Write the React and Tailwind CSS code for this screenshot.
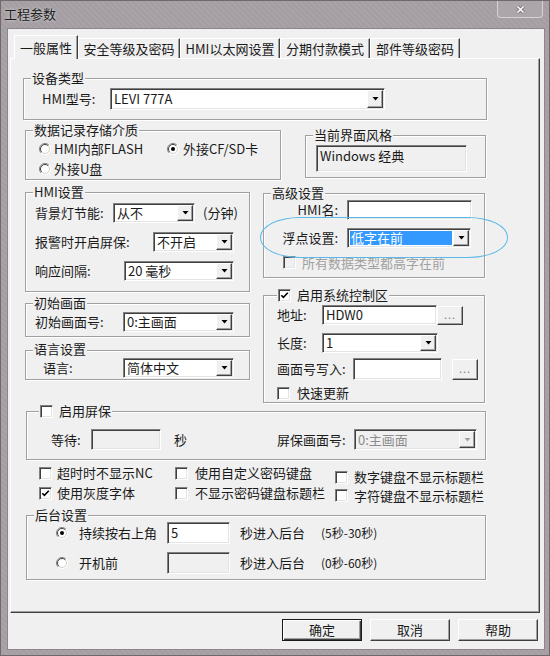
import React from "react";

const SUNKEN =
  "border border-t-[#808080] border-l-[#808080] border-b-white border-r-white shadow-[inset_1px_1px_0_#404040,inset_-1px_-1px_0_#e3e3e3]";
const RAISED =
  "border border-t-white border-l-white border-b-[#404040] border-r-[#404040] shadow-[inset_-1px_-1px_0_#a0a0a0]";

function Arrow({ disabled }) {
  return (
    <svg width="7" height="4" viewBox="0 0 7 4">
      <polygon points="0.5,0 6.5,0 3.5,3.5" fill={disabled ? "#a0a0a0" : "#000"} />
    </svg>
  );
}

function Combo({ w, h = "h-[20px]", text, sel, disabled }) {
  return (
    <div
      className={`flex shrink-0 p-[1px] ${w} ${h} ${SUNKEN} ${
        disabled ? "bg-[#f0f0f0]" : "bg-white"
      }`}
    >
      <div className="flex min-w-0 flex-1 items-center p-[1px]">
        <div
          className={`flex h-full w-full items-center whitespace-nowrap pl-[1px] ${
            sel ? "bg-[#3399ff] text-white" : ""
          } ${disabled ? "text-[#8c8c8c]" : ""}`}
        >
          {text}
        </div>
      </div>
      <div
        className={`flex w-[16px] shrink-0 items-center justify-center bg-[#f0f0f0] ${RAISED}`}
      >
        <Arrow disabled={disabled} />
      </div>
    </div>
  );
}

function Edit({ w, h = "h-[20px]", text, disabled, top }) {
  return (
    <div
      className={`flex shrink-0 whitespace-nowrap pl-[3px] ${
        top ? "items-start pt-[2px]" : "items-center"
      } ${w} ${h} ${SUNKEN} ${disabled ? "bg-[#f0f0f0]" : "bg-white"}`}
    >
      {text}
    </div>
  );
}

function DotBtn({ h = "h-[19px]" }) {
  return (
    <div
      className={`flex w-[26px] shrink-0 items-center justify-center bg-[#f0f0f0] pb-[2px] text-[11px] tracking-[1px] text-[#808080] ${h} ${RAISED}`}
    >
      ...
    </div>
  );
}

function Check({ checked, disabled }) {
  return (
    <div
      className={`relative h-[13px] w-[13px] shrink-0 ${SUNKEN} ${
        disabled ? "bg-[#f0f0f0]" : "bg-white"
      }`}
    >
      {checked && (
        <svg className="absolute left-[1px] top-[1px]" width="9" height="9" viewBox="0 0 9 9">
          <path d="M1.3 4.2 L3.4 6.4 L7.8 1.8" stroke="#000" strokeWidth="1.6" fill="none" />
        </svg>
      )}
    </div>
  );
}

function Radio({ on }) {
  return (
    <svg width="12" height="12" viewBox="0 0 12 12" className="shrink-0">
      <circle cx="6" cy="6" r="5.5" fill="#fff" />
      <path d="M9.9 2.1 A5.5 5.5 0 0 0 2.1 9.9" stroke="#808080" strokeWidth="1" fill="none" />
      <path d="M9.9 2.1 A5.5 5.5 0 0 1 2.1 9.9" stroke="#ffffff" strokeWidth="1" fill="none" />
      <path d="M9.2 2.8 A4.5 4.5 0 0 0 2.8 9.2" stroke="#404040" strokeWidth="1" fill="none" />
      <path d="M9.2 2.8 A4.5 4.5 0 0 1 2.8 9.2" stroke="#d4d0c8" strokeWidth="1" fill="none" />
      {on && <circle cx="6" cy="6" r="2" fill="#000" />}
    </svg>
  );
}

function Group({ label, className = "", children, legendLeft = "left-[7px]", legendTop = "-top-[9px]" }) {
  return (
    <div
      className={`relative shrink-0 border border-[#a0a0a0] shadow-[1px_1px_0_#fff,inset_1px_1px_0_#fff] ${className}`}
    >
      <div
        className={`absolute flex items-center whitespace-nowrap bg-[#f0f0f0] px-[1px] leading-[16px] ${legendLeft} ${legendTop}`}
      >
        {label}
      </div>
      {children}
    </div>
  );
}

function Btn({ children, def }) {
  return (
    <div
      className={`flex h-[22px] w-[80px] items-center justify-center ${
        def
          ? "border border-[#1a1a1a] shadow-[inset_1px_1px_0_#fff,inset_-1px_-1px_0_#404040,inset_-2px_-2px_0_#a0a0a0]"
          : RAISED
      }`}
    >
      {children}
    </div>
  );
}

function Tab({ w, children, active }) {
  return (
    <div
      className={`flex shrink-0 items-center justify-center border-l border-t border-r border-l-white border-t-white border-r-[#404040] bg-[#f0f0f0] shadow-[inset_-1px_0_0_#a0a0a0] ${w} ${
        active ? "relative z-10 -mb-[1px] h-[24px]" : "h-[20px]"
      }`}
    >
      {children}
    </div>
  );
}

export default function App() {
  return (
    <div className="relative h-[656px] w-[550px] overflow-hidden border border-[#6f686e] bg-[repeating-linear-gradient(45deg,#a9a3a8_0_2px,#a49ea3_2px_4px)] font-['Noto_Sans_CJK_SC',sans-serif] text-[13px] leading-[16px] text-[#1a1a1a]">
      {/* title bar */}
      <div className="flex h-[27px] items-start justify-between">
        <div className="pl-[3px] pt-[5px] text-[#202020] [text-shadow:0_0_3px_rgba(255,255,255,0.7)]">
          工程参数
        </div>
        <div className="mr-[6px] flex h-[17px] w-[46px] items-center justify-center rounded-b-[4px] border border-t-0 border-[#d6d1d5] bg-[#aca6ab]">
          <svg width="9" height="9" viewBox="0 0 9 9">
            <path d="M1.5 1.5 L7.5 7.5 M7.5 1.5 L1.5 7.5" stroke="#7a7479" strokeWidth="3.2" />
            <path d="M1.5 1.5 L7.5 7.5 M7.5 1.5 L1.5 7.5" stroke="#ffffff" strokeWidth="1.6" />
          </svg>
        </div>
      </div>

      {/* body */}
      <div className="ml-[6px] mr-[4px] flex h-[622px] flex-col border border-[#8d878c] bg-[#f0f0f0] pt-[6px]">
        {/* tabs */}
        <div className="ml-[6px] flex h-[23px] items-end">
          <Tab w="w-[64px]" active>
            一般属性
          </Tab>
          <Tab w="w-[102px]">安全等级及密码</Tab>
          <Tab w="w-[100px]">HMI以太网设置</Tab>
          <Tab w="w-[90px]">分期付款模式</Tab>
          <Tab w="w-[90px]">部件等级密码</Tab>
        </div>

        {/* panel */}
        <div className="ml-[2px] flex h-[555px] w-[530px] flex-col border border-t-white border-l-white border-r-[#404040] border-b-[#404040] shadow-[inset_-1px_-1px_0_#a0a0a0]">
          {/* 设备类型 */}
          <Group label="设备类型" className="ml-[12px] mt-[19px] h-[42px] w-[464px] pl-[18px] pt-[9px]">
            <div className="flex items-center">
              <div className="w-[68px]">HMI型号:</div>
              <Combo w="w-[275px]" h="h-[22px]" text="LEVI 777A" />
            </div>
          </Group>

          {/* row B */}
          <div className="mt-[10px] flex items-start">
            <Group label="数据记录存储介质" className="ml-[14px] h-[50px] w-[256px] pl-[13px] pt-[8px]">
              <div className="flex h-[20px] items-center">
                <div className="flex w-[128px] items-center gap-[3px]">
                  <Radio />
                  <span>HMI内部FLASH</span>
                </div>
                <div className="flex items-center gap-[4px]">
                  <Radio on />
                  <span>外接CF/SD卡</span>
                </div>
              </div>
              <div className="flex h-[20px] items-center gap-[3px]">
                <Radio />
                <span>外接U盘</span>
              </div>
            </Group>
            <Group label="当前界面风格" className="ml-[24px] mt-[5px] h-[43px] w-[181px] pl-[10px] pt-[9px]">
              <Edit w="w-[151px]" h="h-[27px]" text="Windows 经典" disabled top />
            </Group>
          </div>

          {/* columns */}
          <div className="ml-[14px] mt-[12px] flex items-start">
            {/* left column */}
            <div className="flex w-[225px] shrink-0 flex-col">
              <Group label="HMI设置" className="flex h-[100px] w-[225px] flex-col gap-[9px] pl-[9px] pt-[10px]">
                <div className="flex h-[20px] items-center">
                  <div className="w-[78px]">背景灯节能:</div>
                  <Combo w="w-[82px]" text="从不" />
                  <div className="ml-[8px]">(分钟)</div>
                </div>
                <div className="flex h-[20px] items-center">
                  <div className="w-[118px]">报警时开启屏保:</div>
                  <Combo w="w-[81px]" text="不开启" />
                </div>
                <div className="flex h-[20px] items-center">
                  <div className="w-[89px]">响应间隔:</div>
                  <Combo w="w-[110px]" text="20 毫秒" />
                </div>
              </Group>
              <Group label="初始画面" className="mt-[11px] h-[34px] w-[225px] pl-[9px] pt-[8px]">
                <div className="flex h-[20px] items-center">
                  <div className="w-[88px]">初始画面号:</div>
                  <Combo w="w-[111px]" text="0:主画面" />
                </div>
              </Group>
              <Group
                label="语言设置"
                legendTop="-top-[10px]"
                className="mt-[13px] h-[30px] w-[225px] pl-[17px] pt-[7px]"
              >
                <div className="flex h-[20px] items-center">
                  <div className="w-[80px]">语言:</div>
                  <Combo w="w-[111px]" text="简体中文" />
                </div>
              </Group>
            </div>

            {/* right column */}
            <div className="ml-[13px] mt-[1px] flex w-[222px] shrink-0 flex-col">
              <Group label="高级设置" className="h-[85px] w-[222px] pt-[6px]">
                <div className="flex h-[20px] items-center">
                  <div className="w-[74px] text-right">HMI名:</div>
                  <div className="ml-[9px]">
                    <Edit w="w-[125px]" />
                  </div>
                </div>
                <div className="mt-[8px] flex h-[20px] items-center">
                  <div className="w-[74px] text-right">浮点设置:</div>
                  <div className="ml-[9px]">
                    <Combo w="w-[124px]" text="低字在前" sel />
                  </div>
                </div>
                <div className="mt-[8px] flex h-[13px] items-center gap-[6px] pl-[19px] text-[#a0a0a0]">
                  <Check disabled />
                  <span>所有数据类型都高字在前</span>
                </div>
              </Group>

              <Group
                legendLeft="left-[13px]"
                label={
                  <>
                    <Check checked />
                    <span className="ml-[6px]">启用系统控制区</span>
                  </>
                }
                className="mt-[17px] h-[108px] w-[222px] pl-[13px] pt-[9px]"
              >
                <div className="flex h-[20px] items-center">
                  <div className="w-[45px]">地址:</div>
                  <Edit w="w-[115px]" text="HDW0" />
                  <DotBtn />
                </div>
                <div className="mt-[8px] flex h-[20px] items-center">
                  <div className="w-[45px]">长度:</div>
                  <Combo w="w-[116px]" text="1" />
                </div>
                <div className="mt-[5px] flex h-[22px] items-center">
                  <div className="w-[76px] whitespace-nowrap">画面号写入:</div>
                  <Edit w="w-[89px]" h="h-[22px]" />
                  <div className="ml-[10px]">
                    <DotBtn h="h-[21px]" />
                  </div>
                </div>
                <div className="mt-[7px] flex h-[12px] items-center gap-[7px]">
                  <Check />
                  <span>快速更新</span>
                </div>
              </Group>
            </div>
          </div>

          {/* 启用屏保 */}
          <Group
            legendLeft="left-[12px]"
            label={
              <>
                <Check />
                <span className="ml-[6px]">启用屏保</span>
              </>
            }
            className="ml-[15px] mt-[8px] h-[49px] w-[460px] pl-[24px] pt-[17px]"
          >
            <div className="flex h-[21px] items-center">
              <div className="w-[40px]">等待:</div>
              <Edit w="w-[70px]" h="h-[21px]" disabled />
              <div className="ml-[13px] w-[13px]">秒</div>
              <div className="ml-[90px] w-[77px] whitespace-nowrap">屏保画面号:</div>
              <Combo w="w-[123px]" h="h-[21px]" text="0:主画面" disabled />
            </div>
          </Group>

          {/* checkbox block */}
          <div className="ml-[28px] mt-[3px] flex h-[42px]">
            <div className="flex w-[136px] flex-col">
              <div className="flex h-[20px] items-center gap-[5px]">
                <Check />
                <span>超时时不显示NC</span>
              </div>
              <div className="flex h-[20px] items-center gap-[5px]">
                <Check checked />
                <span>使用灰度字体</span>
              </div>
            </div>
            <div className="flex w-[160px] flex-col">
              <div className="flex h-[20px] items-center gap-[7px]">
                <Check />
                <span>使用自定义密码键盘</span>
              </div>
              <div className="flex h-[20px] items-center gap-[7px]">
                <Check />
                <span>不显示密码键盘标题栏</span>
              </div>
            </div>
            <div className="flex flex-col pt-[5px]">
              <div className="flex h-[19px] items-center gap-[6px]">
                <Check />
                <span>数字键盘不显示标题栏</span>
              </div>
              <div className="flex h-[19px] items-center gap-[6px]">
                <Check />
                <span>字符键盘不显示标题栏</span>
              </div>
            </div>
          </div>

          {/* 后台设置 */}
          <Group label="后台设置" className="ml-[15px] mt-[10px] h-[65px] w-[460px] pl-[29px] pt-[6px]">
            <div className="flex h-[22px] items-center">
              <Radio on />
              <div className="ml-[11px] w-[88px]">持续按右上角</div>
              <Edit w="w-[63px]" h="h-[22px]" text="5" top />
              <div className="ml-[10px] w-[65px]">秒进入后台</div>
              <div className="ml-[16px] text-[12px]">(5秒-30秒)</div>
            </div>
            <div className="mt-[8px] flex h-[22px] items-center">
              <Radio />
              <div className="ml-[11px] w-[88px]">开机前</div>
              <Edit w="w-[63px]" h="h-[22px]" disabled />
              <div className="ml-[10px] w-[65px]">秒进入后台</div>
              <div className="ml-[16px] text-[12px]">(0秒-60秒)</div>
            </div>
          </Group>
        </div>

        {/* buttons */}
        <div className="mt-[6px] flex justify-end gap-[8px] pr-[6px]">
          <Btn def>确定</Btn>
          <Btn>取消</Btn>
          <Btn>帮助</Btn>
        </div>
      </div>

      {/* annotation ellipse */}
      <div className="pointer-events-none absolute left-[259px] top-[216px] h-[41px] w-[248px] rounded-[40px/20px] border-[1.5px] border-[#5cb8e8]" />
    </div>
  );
}
